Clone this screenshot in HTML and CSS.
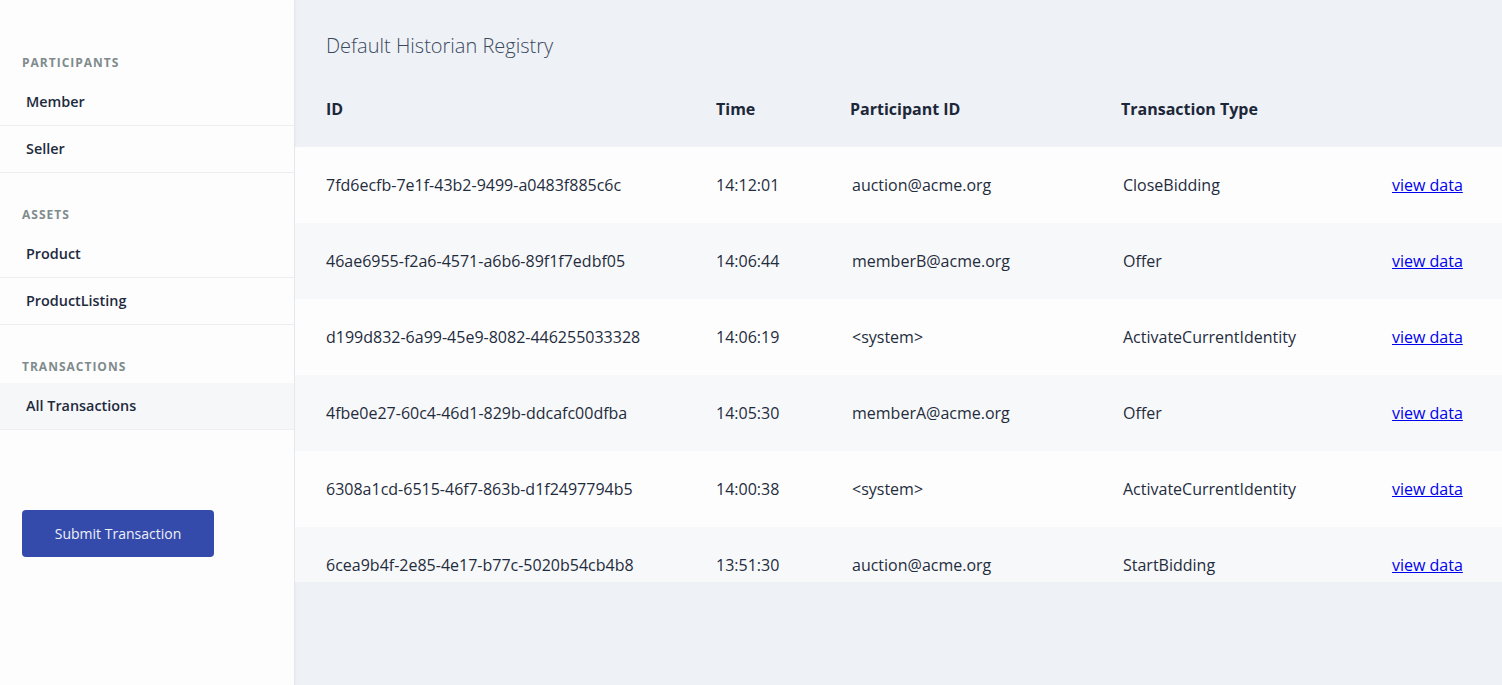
FILE: index.html
```html
<!DOCTYPE html>
<html>
<head>
<meta charset="utf-8">
<link rel="stylesheet" href="styles.css">
</head>
<body>
<div class="app">
  <aside class="sidebar">
    <section class="nav-section">
      <div class="nav-label">Participants</div>
      <div class="nav-item">Member</div>
      <div class="nav-item">Seller</div>
    </section>
    <section class="nav-section">
      <div class="nav-label">Assets</div>
      <div class="nav-item">Product</div>
      <div class="nav-item">ProductListing</div>
    </section>
    <section class="nav-section">
      <div class="nav-label">Transactions</div>
      <div class="nav-item active">All Transactions</div>
    </section>
    <button class="submit-btn">Submit Transaction</button>
  </aside>
  <main class="main">
    <h1 class="title">Default Historian Registry</h1>
    <div class="row head">
      <div class="c1">ID</div>
      <div class="c2">Time</div>
      <div class="c3">Participant ID</div>
      <div class="c4">Transaction Type</div>
      <div class="c5"></div>
    </div>
    <div class="body">
      <div class="row">
        <div class="c1">7fd6ecfb-7e1f-43b2-9499-a0483f885c6c</div>
        <div class="c2">14:12:01</div>
        <div class="c3 d">auction@acme.org</div>
        <div class="c4 d">CloseBidding</div>
        <div class="c5"><a href="#">view data</a></div>
      </div>
      <div class="row">
        <div class="c1">46ae6955-f2a6-4571-a6b6-89f1f7edbf05</div>
        <div class="c2">14:06:44</div>
        <div class="c3 d">memberB@acme.org</div>
        <div class="c4 d">Offer</div>
        <div class="c5"><a href="#">view data</a></div>
      </div>
      <div class="row">
        <div class="c1">d199d832-6a99-45e9-8082-446255033328</div>
        <div class="c2">14:06:19</div>
        <div class="c3 d">&lt;system&gt;</div>
        <div class="c4 d">ActivateCurrentIdentity</div>
        <div class="c5"><a href="#">view data</a></div>
      </div>
      <div class="row">
        <div class="c1">4fbe0e27-60c4-46d1-829b-ddcafc00dfba</div>
        <div class="c2">14:05:30</div>
        <div class="c3 d">memberA@acme.org</div>
        <div class="c4 d">Offer</div>
        <div class="c5"><a href="#">view data</a></div>
      </div>
      <div class="row">
        <div class="c1">6308a1cd-6515-46f7-863b-d1f2497794b5</div>
        <div class="c2">14:00:38</div>
        <div class="c3 d">&lt;system&gt;</div>
        <div class="c4 d">ActivateCurrentIdentity</div>
        <div class="c5"><a href="#">view data</a></div>
      </div>
      <div class="row">
        <div class="c1">6cea9b4f-2e85-4e17-b77c-5020b54cb4b8</div>
        <div class="c2">13:51:30</div>
        <div class="c3 d">auction@acme.org</div>
        <div class="c4 d">StartBidding</div>
        <div class="c5"><a href="#">view data</a></div>
      </div>
    </div>
  </main>
</div>
</body>
</html>
```
FILE: styles.css
```css
* { box-sizing: border-box; }
html, body { margin: 0; padding: 0; height: 100%; }
body {
  font-family: "Open Sans", "Liberation Sans", sans-serif;
  color: #1e2b3c;
  background: #eef1f6;
}
.app {
  display: flex;
  height: 685px;
  overflow: hidden;
}
.sidebar {
  width: 295px;
  flex: 0 0 295px;
  background: #fdfdfd;
  border-right: 1px solid #e4e7eb;
  box-shadow: 1px 0 2px rgba(0,0,0,0.03);
  padding-top: 21px;
  display: flex;
  flex-direction: column;
}
.nav-section {
  padding-top: 34px;
}
.nav-label {
  font-size: 12px;
  line-height: 16px;
  font-weight: 700;
  letter-spacing: 1px;
  text-transform: uppercase;
  color: #7f8b8c;
  padding-left: 22px;
  margin-bottom: 8px;
}
.nav-item {
  height: 47px;
  line-height: 46px;
  font-size: 14.4px;
  font-weight: 600;
  color: #1d2a3e;
  padding-left: 26px;
  border-bottom: 1px solid #eceef2;
}
.nav-item.active {
  background: #f6f7f8;
}
.submit-btn {
  align-self: flex-start;
  margin: 80px 0 0 22px;
  width: 192px;
  height: 47px;
  border: none;
  border-radius: 4px;
  background: #354bab;
  color: #eef0f8;
  font-family: "Open Sans", "Liberation Sans", sans-serif;
  font-size: 14px;
  font-weight: 400;
  padding: 0 0 1px;
}
.main {
  flex: 1;
  min-width: 0;
  padding-top: 32px;
}
.title {
  margin: 0 0 11px 31px;
  font-size: 20px;
  line-height: 28px;
  font-weight: 300;
  color: #3a495c;
}
.row {
  display: grid;
  grid-template-columns: 390px 134px 271px 271px 1fr;
  height: 76px;
  align-items: center;
  font-size: 16px;
  color: #1f2c3d;
  background: #fdfdfd;
}
.row > div { padding-left: 31px; white-space: nowrap; }
.row > .d { padding-left: 33px; }
.row.head {
  background: transparent;
  font-weight: 700;
  font-size: 16px;
  color: #1c2839;
}
.body {
  height: 435px;
  overflow: hidden;
}
.body .row:nth-child(even) { background: #f7f8f9; }
.row a { color: #0000ee; text-decoration: underline; }
```
